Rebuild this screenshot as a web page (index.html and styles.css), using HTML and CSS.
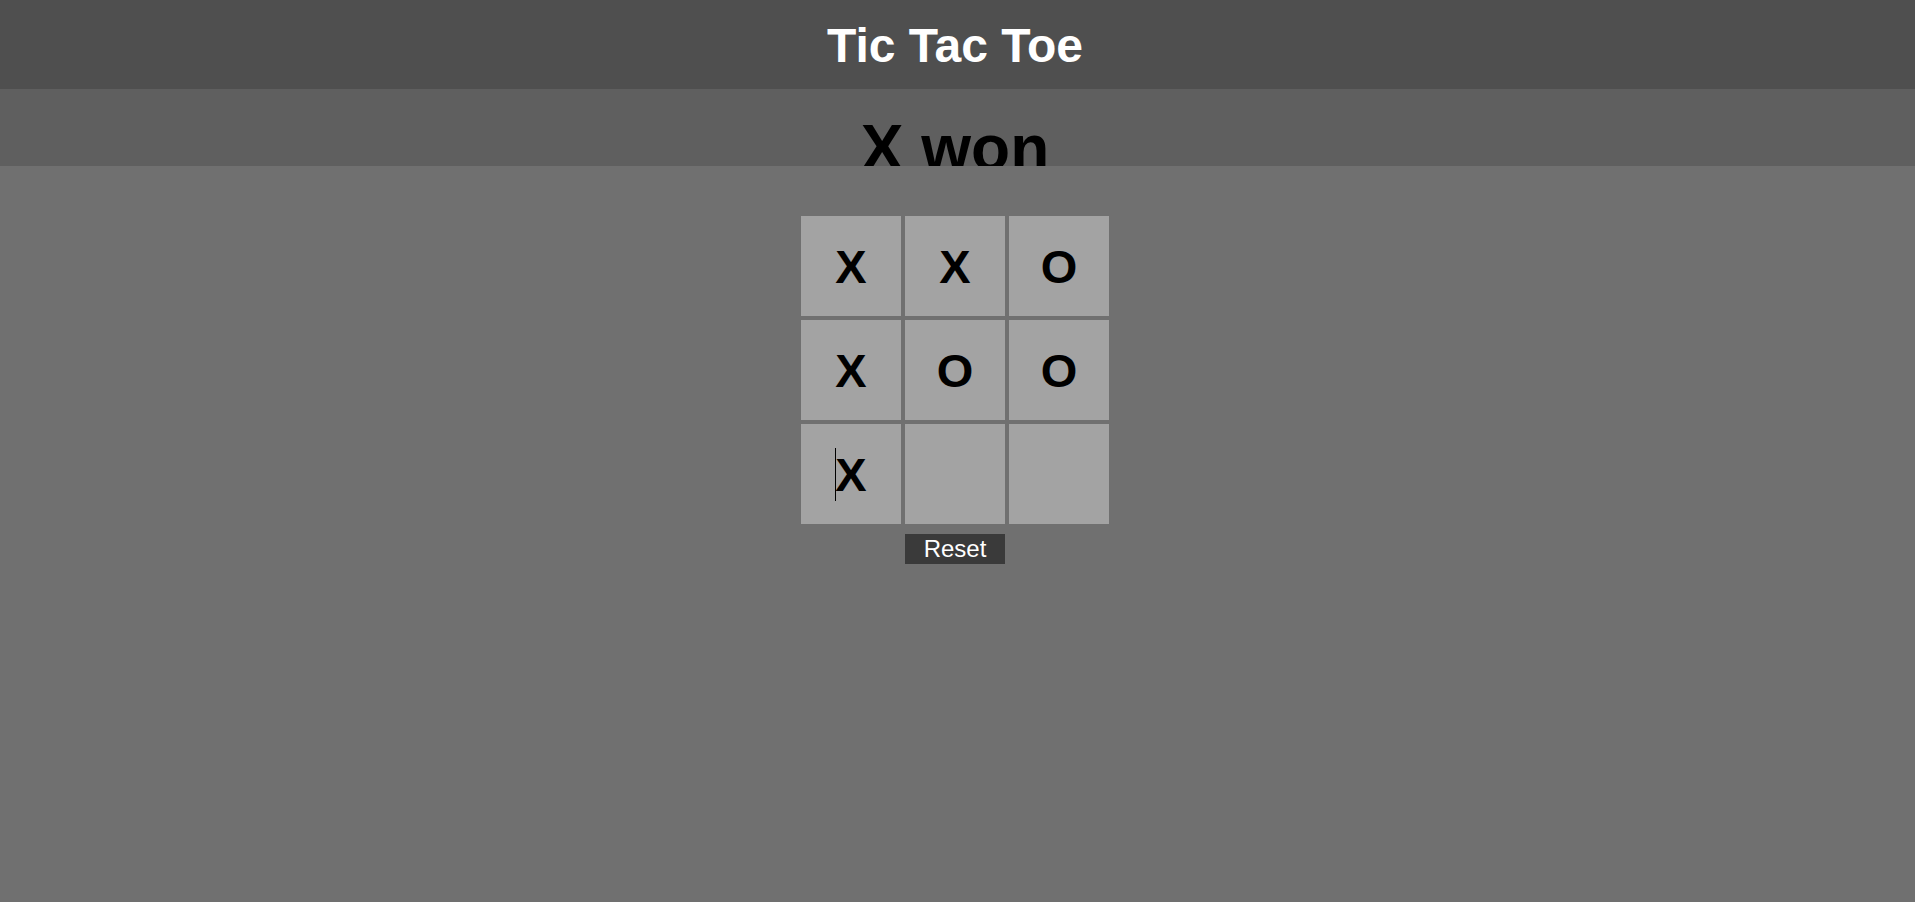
FILE: index.html
```html
<!DOCTYPE html>
<html lang="en">
<head>
<meta charset="utf-8">
<title>Tic Tac Toe</title>
<link rel="stylesheet" href="styles.css">
</head>
<body>
<header class="header">Tic Tac Toe</header>
<div class="status"><h2 class="status-text">X won</h2></div>
<main class="main">
  <div class="board">
    <div class="cell">X</div>
    <div class="cell">X</div>
    <div class="cell">O</div>
    <div class="cell">X</div>
    <div class="cell">O</div>
    <div class="cell">O</div>
    <div class="cell"><span class="caret"></span>X</div>
    <div class="cell"></div>
    <div class="cell"></div>
  </div>
  <button class="reset">Reset</button>
</main>
</body>
</html>
```
FILE: styles.css
```css
html, body {
  margin: 0;
  padding: 0;
  height: 100%;
}
body {
  background: #707070;
  font-family: "Liberation Sans", Arial, sans-serif;
}
.header {
  background: #4f4f4f;
  color: #ffffff;
  font-weight: bold;
  font-size: 48px;
  line-height: 55px;
  height: 89px;
  box-sizing: border-box;
  padding-top: 18px;
  padding-right: 5px;
  text-align: center;
}
.status {
  background: #5f5f5f;
  height: 77px;
  overflow: hidden;
  text-align: center;
  padding-right: 5px;
}
.status-text {
  margin: 0;
  padding-top: 22px;
  font-size: 64px;
  font-weight: bold;
  color: #000;
}
.main {
  display: flex;
  flex-direction: column;
  align-items: center;
  padding-top: 50px;
  padding-right: 5px;
}
.board {
  display: grid;
  grid-template-columns: repeat(3, 100px);
  grid-template-rows: repeat(3, 100px);
  gap: 4px;
}
.cell {
  background: #a3a3a3;
  display: flex;
  align-items: center;
  justify-content: center;
  font-size: 47px;
  font-weight: bold;
  color: #000;
}
.caret {
  display: inline-block;
  width: 1px;
  height: 53px;
  background: #000;
  margin-right: -1px;
}
.reset {
  margin-top: 10px;
  width: 100px;
  height: 30px;
  padding: 0;
  border: none;
  background: #3a3a3a;
  color: #ffffff;
  font-family: "Liberation Sans", Arial, sans-serif;
  font-size: 24px;
  line-height: 30px;
}
```
